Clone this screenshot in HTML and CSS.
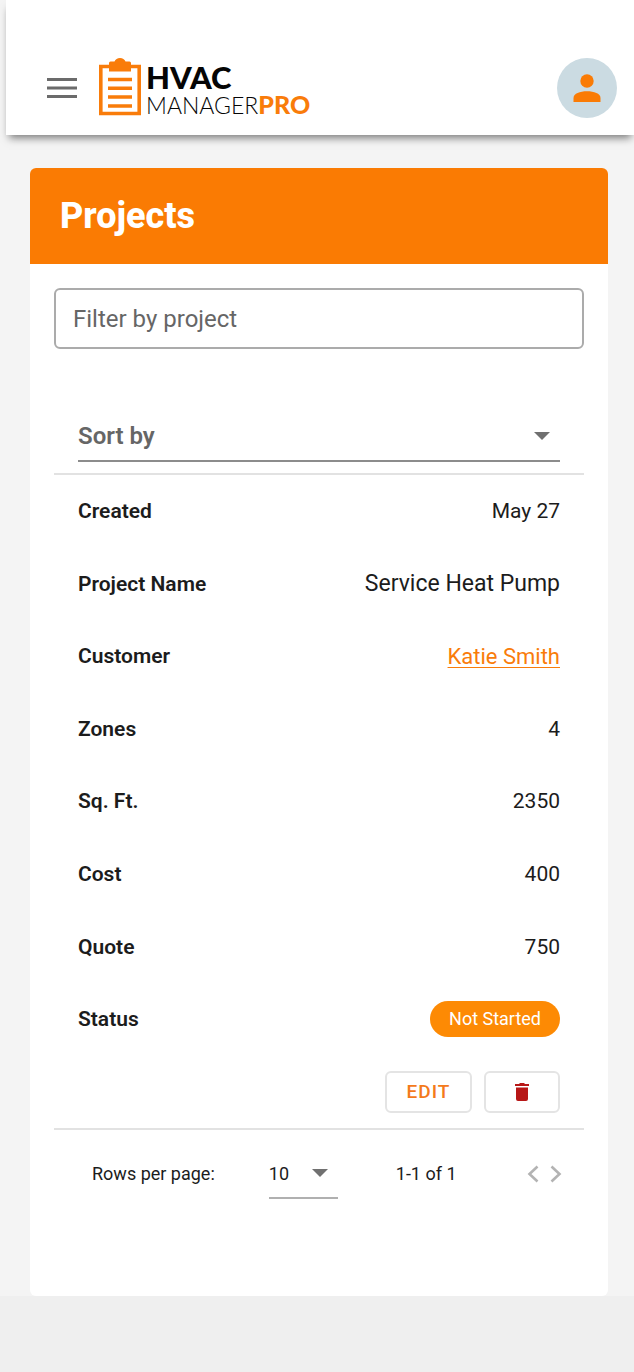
FILE: index.html
```html
<!DOCTYPE html>
<html lang="en">
<head>
<meta charset="utf-8">
<meta name="viewport" content="width=device-width, initial-scale=1">
<title>HVAC Manager Pro - Projects</title>
<link rel="stylesheet" href="styles.css">
</head>
<body>
<div class="page">
  <header class="topbar">
    <button class="menu-button" type="button" aria-label="Menu">
      <svg width="32" height="24" viewBox="0 0 32 24" aria-hidden="true"><path d="M1 3.500h30M1 12h30M1 20.500h30" stroke="#6b6b6b" stroke-width="2.800" fill="none"/></svg>
    </button>
    <a class="logo" href="#" aria-label="HVAC Manager Pro">
      <svg class="logo-mark" width="42" height="58" viewBox="0 0 42 58" aria-hidden="true">
        <path d="M10 8.500H1.800V55.500H40.200V8.500H32" fill="none" stroke="#f97c0a" stroke-width="3.600"/>
        <path d="M10 5Q10 3.500 11.500 3.500H15.500Q17 0 21 0T26.500 3.500H30.500Q32 3.500 32 5V13.500H10Z" fill="#f97c0a"/>
        <path d="M9 21.500H33M9 30.200H33M9 39H33M9 48H33" stroke="#f97c0a" stroke-width="3.400"/>
      </svg>
      <span class="logo-text">
        <span class="logo-top">HVAC</span>
        <span class="logo-bottom">MANAGER<b>PRO</b></span>
      </span>
    </a>
    <button class="avatar" type="button" aria-label="Account">
      <svg width="28" height="28" viewBox="0 0 28 28" aria-hidden="true"><circle cx="14" cy="7" r="6.700" fill="#fa7b05"/><path d="M.5 28V24C.5 19.500 7 17.300 14 17.300S27.500 19.500 27.500 24V28Z" fill="#fa7b05"/></svg>
    </button>
  </header>
  <main class="card">
    <h1 class="card-title">Projects</h1>
    <div class="card-body">
      <input class="filter" type="text" placeholder="Filter by project" aria-label="Filter by project">
      <div class="sort">
        <select class="sort-select" aria-label="Sort by"><option>Sort by</option></select>
      </div>
      <table class="details">
        <tbody>
          <tr><th scope="row">Created</th><td>May 27</td></tr>
          <tr><th scope="row">Project Name</th><td class="project-name">Service Heat Pump</td></tr>
          <tr><th scope="row">Customer</th><td><a class="customer" href="#">Katie Smith</a></td></tr>
          <tr><th scope="row">Zones</th><td>4</td></tr>
          <tr><th scope="row">Sq. Ft.</th><td>2350</td></tr>
          <tr><th scope="row">Cost</th><td>400</td></tr>
          <tr><th scope="row">Quote</th><td>750</td></tr>
          <tr><th scope="row">Status</th><td><span class="chip">Not Started</span></td></tr>
          <tr><td colspan="2"><div class="actions">
            <button class="action edit" type="button">EDIT</button>
            <button class="action delete" type="button" aria-label="Delete">
              <svg width="14" height="18" viewBox="0 0 14 18" aria-hidden="true"><path d="M0 1H4L5 0H9L10 1H14V3H0ZM1 4.500H13V16Q13 18 11 18H3Q1 18 1 16Z" fill="#b71717"/></svg>
            </button>
          </div></td></tr>
        </tbody>
      </table>
      <div class="pager">
        <label for="rows">Rows per page:</label>
        <select class="rows-select" id="rows"><option>10</option></select>
        <span class="range">1-1 of 1</span>
        <div class="pager-nav">
          <button class="nav-button" type="button" aria-label="Previous page"><svg width="12" height="18" viewBox="0 0 12 18" aria-hidden="true"><path d="M10.500 1.500L2.500 9L10.500 16.500" fill="none" stroke="#b3b3b3" stroke-width="2.600"/></svg></button>
          <button class="nav-button" type="button" aria-label="Next page"><svg width="12" height="18" viewBox="0 0 12 18" aria-hidden="true"><path d="M1.500 1.500L9.500 9L1.500 16.500" fill="none" stroke="#b3b3b3" stroke-width="2.600"/></svg></button>
        </div>
      </div>
    </div>
  </main>
  <footer class="bottom"></footer>
</div>
</body>
</html>
```
FILE: styles.css
```css
* { box-sizing: border-box; }
body {
  margin: 0;
  background: #f4f4f4;
  color: #1c1c1c;
  font-family: Roboto, "Liberation Sans", sans-serif;
  font-size: 21px;
}
button { padding: 0; border: 0; background: none; font-family: inherit; cursor: pointer; }
svg { display: block; }
.page { display: flex; flex-direction: column; min-height: 100vh; }
.topbar {
  display: flex;
  align-items: center;
  margin-left: 6px;
  padding: 58px 17px 17px 40px;
  background: #fff;
  box-shadow: 0 6px 8px -3px rgba(0, 0, 0, .5);
}
.logo { display: flex; gap: 5px; margin-left: 21px; color: #050505; text-decoration: none; }
.logo-text { display: flex; flex-direction: column; font-family: Lato, sans-serif; }
.logo-top { padding-top: 4px; font-size: 31px; font-weight: 900; line-height: 30px; }
.logo-bottom { font-size: 23px; font-weight: 300; line-height: 26px; }
.logo-bottom b { color: #f97c0a; font-size: 25px; font-weight: 900; line-height: 24px; }
.avatar {
  display: grid;
  place-items: center;
  width: 60px;
  height: 60px;
  margin-left: auto;
  border-radius: 50%;
  background: #cbdbe2;
}
.card {
  flex: 1;
  margin: 33px 26px 0 30px;
  border-radius: 6px;
  background: #fff;
}
.card-title {
  margin: 0;
  padding: 28px 30px;
  border-radius: 6px 6px 0 0;
  background: #fa7b03;
  color: #fff;
  font-size: 36px;
  font-weight: 800;
  line-height: 40px;
}
.card-body { padding: 24px 24px 0; }
.filter {
  display: block;
  width: 100%;
  height: 61px;
  padding: 0 17px;
  border: 2px solid #ababab;
  border-radius: 6px;
  background: #fff;
  font: 24px Roboto, sans-serif;
}
.filter::placeholder { color: #666; opacity: 1; }
select {
  appearance: none;
  border: 0;
  border-radius: 0;
  background: url("data:image/svg+xml,%3Csvg xmlns='http://www.w3.org/2000/svg' width='16' height='8'%3E%3Cpath d='M0 0H16L8 8Z' fill='%23707070'/%3E%3C/svg%3E") no-repeat right 10px center;
  font-family: inherit;
}
.sort { padding: 63px 24px 11px; border-bottom: 2px solid #e2e2e2; }
.sort-select {
  display: block;
  width: 100%;
  height: 50px;
  padding: 0;
  border-bottom: 2px solid #8c8c8c;
  color: #666;
  font-size: 24px;
  font-weight: 600;
}
.details { width: 100%; height: 655px; border-spacing: 0; border-bottom: 2px solid #e2e2e2; }
.details th { height: 72px; padding: 0 0 0 24px; font-weight: 600; text-align: left; }
.details td { height: 72px; padding: 0 24px 0 0; text-align: right; }
.details .project-name { font-size: 23px; }
.customer { color: #f97c0a; font-size: 22px; text-decoration-thickness: 1px; text-underline-offset: 3px; }
.chip {
  display: inline-block;
  padding: 0 19px;
  border-radius: 18px;
  background: #fd8a04;
  color: #fff;
  font-size: 18px;
  line-height: 36px;
  vertical-align: middle;
}
.actions { display: flex; justify-content: flex-end; gap: 12px; }
.action {
  display: grid;
  place-items: center;
  height: 42px;
  border: 2px solid #e4e4e4;
  border-radius: 6px;
}
.edit { width: 87px; color: #f47a1b; font-size: 19px; font-weight: 500; letter-spacing: 1px; }
.delete { width: 76px; }
.pager { display: flex; align-items: flex-start; padding: 19px 22px 97px 38px; font-size: 18px; line-height: 50px; }
.rows-select {
  width: 69px;
  height: 50px;
  margin-left: 54px;
  padding: 0;
  border-bottom: 2px solid #b0b0b0;
  color: #1c1c1c;
  font-size: 18px;
}
.range { margin-left: 58px; }
.pager-nav { display: flex; gap: 11px; margin-left: auto; height: 50px; align-items: center; }
.bottom { height: 77px; background: #efefef; }
```
